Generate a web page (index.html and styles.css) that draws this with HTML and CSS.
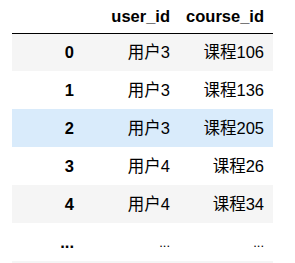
FILE: index.html
```html
<!DOCTYPE html>
<html>
<head>
<meta charset="utf-8">
<link rel="stylesheet" href="styles.css">
</head>
<body>
<table class="df">
  <thead>
    <tr class="head">
      <th class="c-idx"></th>
      <th class="c-user">user_id</th>
      <th class="c-course">course_id</th>
    </tr>
  </thead>
  <tbody>
    <tr class="row odd"><th>0</th><td>用户3</td><td>课程106</td></tr>
    <tr class="row"><th>1</th><td>用户3</td><td>课程136</td></tr>
    <tr class="row hover"><th>2</th><td>用户3</td><td>课程205</td></tr>
    <tr class="row"><th>3</th><td>用户4</td><td>课程26</td></tr>
    <tr class="row odd"><th>4</th><td>用户4</td><td>课程34</td></tr>
    <tr class="row ell"><th>...</th><td>...</td><td>...</td></tr>
    <tr class="row odd"><th></th><td></td><td></td></tr>
  </tbody>
</table>
</body>
</html>
```
FILE: styles.css
```css
html, body {
  margin: 0;
  padding: 0;
  background: #ffffff;
  overflow: hidden;
}
body {
  padding-left: 12px;
  font-family: "Liberation Sans", Arial, "Noto Sans CJK SC", sans-serif;
  font-size: 16.5px;
  color: #000000;
}
.df {
  border-collapse: collapse;
  border-spacing: 0;
  table-layout: fixed;
  width: 261px;
}
.df th, .df td {
  box-sizing: border-box;
  padding: 0 9px 0 0;
  text-align: right;
  vertical-align: middle;
  white-space: nowrap;
  line-height: 19px;
}
.df th { font-weight: bold; }
.c-idx { width: 71px; }
.c-user { width: 96px; }
.c-course { width: 94px; }
.head th {
  height: 33px;
  border-bottom: 1px solid #000000;
  vertical-align: middle;
}
.row th, .row td { height: 38px; }
.row.odd { background: #f5f5f5; }
.row.hover { background: #d9ebfb; }
.row.ell td { font-size: 13px; }
```
